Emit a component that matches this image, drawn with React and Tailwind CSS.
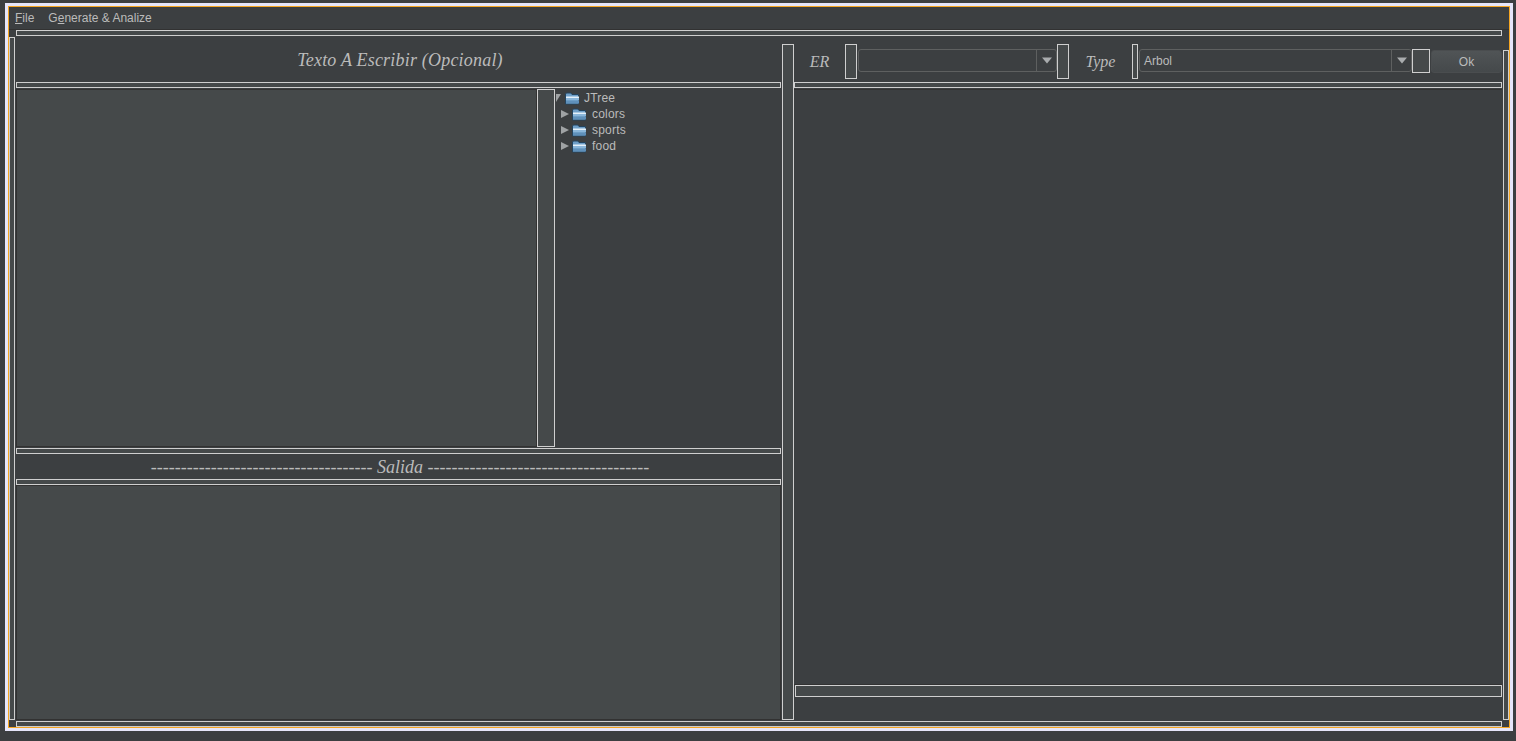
const sash = "border border-[#cfcfcf] bg-[#45494a] box-border";
const titleFont = { fontFamily: '"Liberation Serif", serif' };

function Arrow({ open }) {
    return (
        <svg width="8" height="10" viewBox="0 0 8 10" className="shrink-0">
            {open ? <path d="M1 1h5L1 9z" fill="#a0a3a5" /> : <path d="M0 1l8 4-8 4z" fill="#a0a3a5" />}
        </svg>
    );
}

function Folder() {
    return (
        <svg width="15" height="13" viewBox="0 0 15 13" className="shrink-0">
            <path d="M.5 12V2L1.5 1H6l1 1.5h6.5V12z" fill="#6f9fc8" stroke="#24445e" strokeWidth="1" />
            <path d="M1 4.5h13v1.5H1z" fill="#e4f0fa" />
            <path d="M1 6h13v2.5H1z" fill="#8ab6da" />
            <path d="M1 8.5h13V11.5H1z" fill="#5f90ba" />
        </svg>
    );
}

function TreeRow({ label }) {
    return (
        <div className="flex items-center h-4 pl-[6px]">
            <Arrow />
            <div className="ml-[3px]"><Folder /></div>
            <span className="ml-[5px] tracking-[0.2px]">{label}</span>
        </div>
    );
}

function Combo({ width, value }) {
    return (
        <div className={`${width} h-[23px] mt-[5px] flex shrink-0 border border-[#5e6060] rounded-[3px] box-border`}>
            <div className="flex-1 pl-1 leading-[23px] text-[#bbbbbb]">{value}</div>
            <div className="w-5 border-l border-[#5e6060] flex items-center justify-center">
                <svg width="10" height="7" viewBox="0 0 10 7"><path d="M0 .5h10L5 6.5z" fill="#a9acae" /></svg>
            </div>
        </div>
    );
}

function ScriptLabel({ width, children }) {
    return (
        <div className={`${width} h-[35px] flex items-center justify-center shrink-0 italic text-[16px] text-[#bbbbbb]`} style={titleFont}>
            {children}
        </div>
    );
}

export default function App() {
    return (
        <div className="h-[741px] w-[1516px] overflow-hidden bg-[#3c3f41] pt-[3px] pl-[5px] text-xs text-[#bbbbbb]" style={{ fontFamily: '"Liberation Sans", sans-serif' }}>
            <div className="w-[1508px] h-[728px] border-[3px] border-[#e6e6fa] box-border">
                <div className="w-full h-full border border-[#f5a623] box-border flex flex-col">
                    {/* menu */}
                    <div className="h-[22px] flex items-center pl-[6px] gap-[14px] shrink-0 border-b border-[#323232] box-content -mb-px">
                        <span><u>F</u>ile</span>
                        <span>G<u>e</u>nerate &amp; Analize</span>
                    </div>
                    <div className="h-[7px] pt-px shrink-0 pl-[7px]">
                        <div className={`${sash} w-[1486px] h-[6px]`} />
                    </div>

                    <div className="flex-1 flex min-h-0">
                        <div className={`${sash} w-[6px] mt-px mb-px shrink-0`} />
                        <div className="w-[765px] ml-px shrink-0 flex flex-col">
                            <div className="h-[46px] pt-[2px] pl-[3px] flex items-center justify-center italic text-[18px] tracking-[0.2px] shrink-0" style={titleFont}>
                                Texto A Escribir (Opcional)
                            </div>
                            <div className={`${sash} h-[6px] shrink-0`} />
                            <div className="h-[358px] mt-px flex shrink-0">
                                <div className="w-[521px] bg-[#45494a] border border-[#323232] box-border shrink-0" />
                                <div className={`${sash} w-[18px] shrink-0 bg-[#3c3f41]`} />
                                <div className="flex-1 pt-px">
                                    <div className="flex items-center h-4">
                                        <Arrow open />
                                        <div className="ml-[2px]"><Folder /></div>
                                        <span className="ml-[4px] tracking-[0.2px]">JTree</span>
                                    </div>
                                    <TreeRow label="colors" />
                                    <TreeRow label="sports" />
                                    <TreeRow label="food" />
                                </div>
                            </div>
                            <div className={`${sash} h-[6px] mt-px shrink-0`} />
                            <div className="h-[25px] pl-[3px] flex items-center justify-center italic text-[18px] shrink-0" style={titleFont}>
                                ------------------------------------- Salida -------------------------------------
                            </div>
                            <div className={`${sash} h-[6px] shrink-0`} />
                            <div className="flex-1 mb-px bg-[#45494a] border border-[#323232] box-border" />
                        </div>

                        <div className={`${sash} w-[12px] ml-px mt-[8px] mb-px shrink-0`} />

                        <div className="w-[708px] shrink-0 flex flex-col">
                            <div className="h-[46px] pt-[8px] flex items-start shrink-0">
                                <ScriptLabel width="w-[51px]">ER</ScriptLabel>
                                <div className={`${sash} w-[12px] h-[35px] shrink-0`} />
                                <div className="w-px shrink-0" />
                                <Combo width="w-[199px]" />
                                <div className={`${sash} w-[12px] h-[35px] shrink-0`} />
                                <ScriptLabel width="w-[63px]">Type</ScriptLabel>
                                <div className={`${sash} w-[6px] h-[35px] shrink-0`} />
                                <div className="w-px shrink-0" />
                                <Combo width="w-[273px]" value="Arbol" />
                                <div className={`${sash} w-[18px] h-[24px] mt-[5px] shrink-0`} />
                                <button className="w-[71px] h-[23px] ml-px mt-[6px] shrink-0 rounded-[3px] border border-[#4a4d4f] bg-gradient-to-b from-[#505456] to-[#45494b] text-[#bbbbbb] box-border">
                                    Ok
                                </button>
                            </div>
                            <div className={`${sash} h-[6px] shrink-0`} />
                            <div className="h-[596px] mt-px border-y border-[#323232] box-border shrink-0" />
                            <div className={`${sash} h-[12px] ml-px shrink-0`} />
                        </div>

                        <div className={`${sash} w-[6px] ml-px mt-[14px] mb-px shrink-0`} />
                    </div>

                    <div className="h-[6px] shrink-0 pl-[7px]">
                        <div className={`${sash} w-[1486px] h-[6px]`} />
                    </div>
                </div>
            </div>
        </div>
    );
}
